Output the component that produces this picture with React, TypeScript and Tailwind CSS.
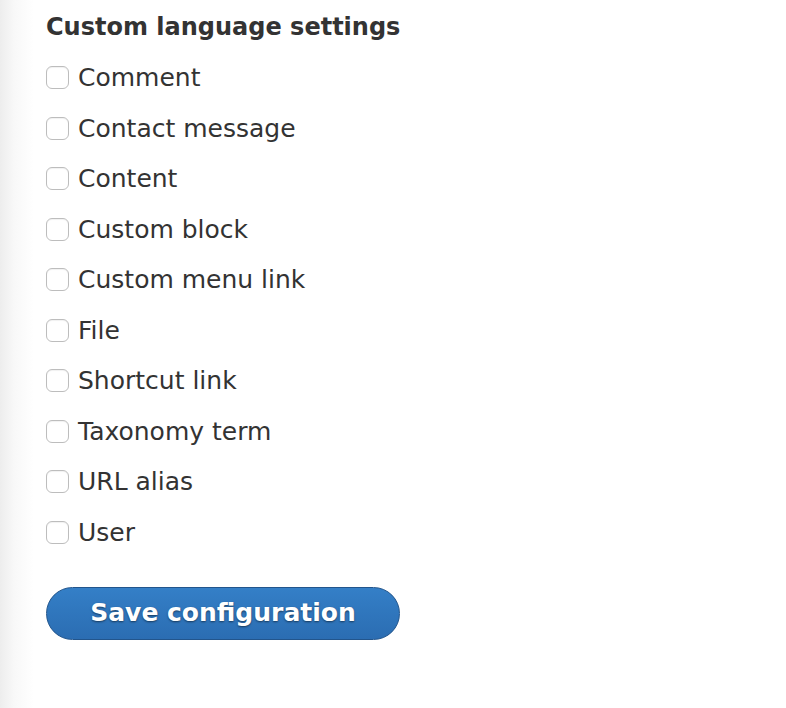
const items = [
  'Comment',
  'Contact message',
  'Content',
  'Custom block',
  'Custom menu link',
  'File',
  'Shortcut link',
  'Taxonomy term',
  'URL alias',
  'User',
]

export default function App() {
  return (
    <div
      className="h-[708px] w-[786px] bg-[linear-gradient(to_right,#ededed_0px,#f8f8f8_14px,#ffffff_34px)] text-[#333]"
      style={{ fontFamily: '"DejaVu Sans", "Lucida Grande", sans-serif' }}
    >
      <div className="pl-[46px] pt-[12px]">
        <h2 className="text-[24px] leading-[30px] font-bold text-[#333]">Custom language settings</h2>
        <div className="mt-[21px] flex flex-col gap-[21.5px]">
          {items.map((label) => (
            <label key={label} className="flex h-[29px] items-center gap-[9px] text-[25px] leading-[29px]">
              <span className="h-[23px] w-[23px] shrink-0 rounded-[6px] border border-[#bdbdbd] bg-white shadow-[inset_0_1px_1px_rgba(0,0,0,0.06)]" />
              {label}
            </label>
          ))}
        </div>
        <button
          type="button"
          className="mt-[40px] h-[53px] w-[354px] rounded-full border border-[#22558c] bg-[linear-gradient(#347fc7,#2b6db2)] text-[25px] font-bold text-white [text-shadow:0_1px_2px_rgba(0,0,0,0.5)]"
        >
          Save configuration
        </button>
      </div>
    </div>
  )
}
